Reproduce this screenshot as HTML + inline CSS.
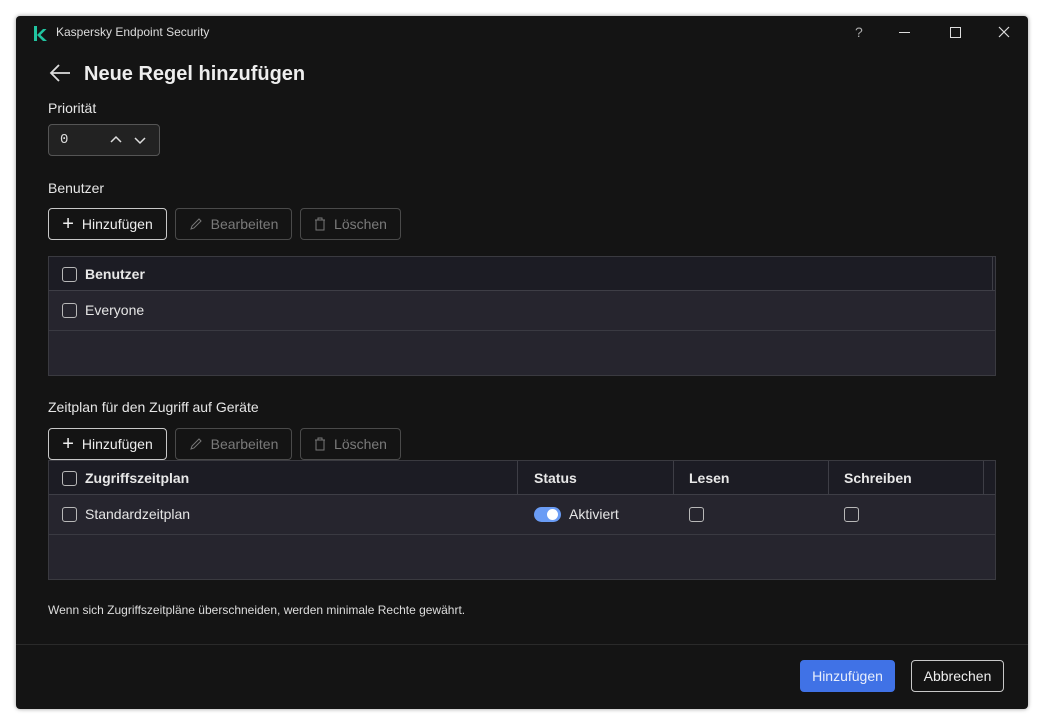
<!DOCTYPE html>
<html><head><meta charset="utf-8"><style>
*{box-sizing:border-box;margin:0;padding:0}
body{width:1044px;height:724px;background:#fff;font-family:"Liberation Sans",sans-serif;color:#e8e8e8;position:relative;overflow:hidden}
.win{position:absolute;left:16px;top:16px;width:1012px;height:693px;background:#141414;border-radius:4px;box-shadow:0 0 4px rgba(0,0,0,.4)}
.a{position:absolute}
.t{font-size:14px;color:#e6e6e6}
.btn{position:absolute;height:32px;border:1px solid #c8c8c8;border-radius:4px;font-size:14px;display:flex;align-items:center;justify-content:center;gap:8px;color:#eee}
.dis{border-color:#4a4a4a;color:#7a7a7a}
.tbl{position:absolute;left:48px;width:948px;background:#26252e;border:1px solid #3a3a40}
.hd{position:absolute;left:0;right:0;top:0;height:34px;background:#1c1c24;border-bottom:1px solid #3e3e46}
.rw{position:absolute;left:0;right:0;height:40px;border-bottom:1px solid #3a3a42}
.cb{position:absolute;width:15px;height:15px;border:1.5px solid #b8b8b8;border-radius:3px}
.b{font-weight:bold;font-size:14px;position:absolute}
.vs{position:absolute;top:0;width:1px;height:34px;background:#3e3e46}
</style></head><body>
<div class="win">
<svg class="a" style="left:17px;top:10px" width="14" height="15" viewBox="0 0 14 15"><path d="M1 0h3v15H1zM4 9l6-6h3.5l-6 6 6.5 6H10z" fill="#21c4a0"/></svg>
<div class="a" style="left:40px;top:9px;font-size:12px;color:#ddd">Kaspersky Endpoint Security</div>
<div class="a" style="left:839px;top:8px;font-size:14px;color:#aaa">?</div>
<div class="a" style="left:883px;top:16px;width:11px;height:1px;background:#ddd"></div>
<div class="a" style="left:934px;top:11px;width:11px;height:11px;border:1px solid #ddd"></div>
<svg class="a" style="left:982px;top:10px" width="12" height="12"><path d="M1 1L11 11M11 1L1 11" stroke="#ddd" stroke-width="1.2"/></svg>
<svg class="a" style="left:33px;top:48px" width="22" height="18"><path d="M21 9H2M10 1L2 9l8 8" stroke="#ddd" stroke-width="1.8" fill="none"/></svg>
<div class="a" style="left:68px;top:47px;font-size:20px;font-weight:bold;color:#eee">Neue Regel hinzufügen</div>
<div class="a t" style="left:32px;top:84px">Priorität</div>
<div class="a" style="left:32px;top:108px;width:112px;height:32px;background:#222;border:1px solid #555;border-radius:4px"></div>
<div class="a" style="left:44px;top:116px;font-family:'Liberation Mono',monospace;font-size:14px;color:#ddd">0</div>
<svg class="a" style="left:94px;top:119px" width="40" height="10"><path d="M1 7l5-5 5 5M25 3l5 5 5-5" stroke="#ddd" stroke-width="1.5" fill="none"/></svg>
<div class="a t" style="left:32px;top:164px">Benutzer</div>
</div>
<div class="btn" style="left:48px;top:208px;width:119px"><span style="font-size:20px;font-weight:300;line-height:1">+</span>Hinzufügen</div>
<div class="btn dis" style="left:175px;top:208px;width:117px"><svg width="14" height="14"><path d="M2 12l1-3 7-7 2 2-7 7z" stroke="#777" fill="none"/></svg>Bearbeiten</div>
<div class="btn dis" style="left:300px;top:208px;width:101px"><svg width="12" height="14"><path d="M1 3h10M4 3V1h4v2M2 3v10h8V3" stroke="#777" fill="none"/></svg>Löschen</div>
<div class="tbl" style="top:256px;height:120px">
<div class="hd"><div class="cb" style="left:13px;top:10px"></div><div class="b" style="left:36px;top:9px">Benutzer</div><div class="vs" style="left:943px"></div></div>
<div class="rw" style="top:34px"><div class="cb" style="left:13px;top:12px"></div><div class="a t" style="left:36px;top:11px">Everyone</div></div>
</div>
<div class="a t" style="left:48px;top:399px">Zeitplan für den Zugriff auf Geräte</div>
<div class="btn" style="left:48px;top:428px;width:119px"><span style="font-size:20px;font-weight:300;line-height:1">+</span>Hinzufügen</div>
<div class="btn dis" style="left:175px;top:428px;width:117px"><svg width="14" height="14"><path d="M2 12l1-3 7-7 2 2-7 7z" stroke="#777" fill="none"/></svg>Bearbeiten</div>
<div class="btn dis" style="left:300px;top:428px;width:101px"><svg width="12" height="14"><path d="M1 3h10M4 3V1h4v2M2 3v10h8V3" stroke="#777" fill="none"/></svg>Löschen</div>
<div class="tbl" style="top:460px;height:120px">
<div class="hd"><div class="cb" style="left:13px;top:10px"></div><div class="b" style="left:36px;top:9px">Zugriffszeitplan</div>
<div class="vs" style="left:468px"></div><div class="b" style="left:485px;top:9px">Status</div>
<div class="vs" style="left:624px"></div><div class="b" style="left:640px;top:9px">Lesen</div>
<div class="vs" style="left:779px"></div><div class="b" style="left:795px;top:9px">Schreiben</div>
<div class="vs" style="left:934px"></div></div>
<div class="rw" style="top:34px"><div class="cb" style="left:13px;top:12px"></div><div class="a t" style="left:36px;top:11px">Standardzeitplan</div>
<div class="a" style="left:485px;top:12px;width:27px;height:15px;border-radius:8px;background:#6a9cf5"><div class="a" style="left:13px;top:2px;width:11px;height:11px;border-radius:50%;background:#fff"></div></div>
<div class="a t" style="left:520px;top:11px">Aktiviert</div>
<div class="cb" style="left:640px;top:12px"></div><div class="cb" style="left:795px;top:12px"></div></div>
</div>
<div class="a" style="left:48px;top:603px;font-size:12px;color:#ddd">Wenn sich Zugriffszeitpläne überschneiden, werden minimale Rechte gewährt.</div>
<div class="a" style="left:16px;top:644px;width:1012px;height:1px;background:#2a2a2a"></div>
<div class="btn" style="left:800px;top:660px;width:95px;background:#4072e6;border-color:#4072e6;color:#e8eefc">Hinzufügen</div>
<div class="btn" style="left:911px;top:660px;width:93px">Abbrechen</div>
</body></html>
